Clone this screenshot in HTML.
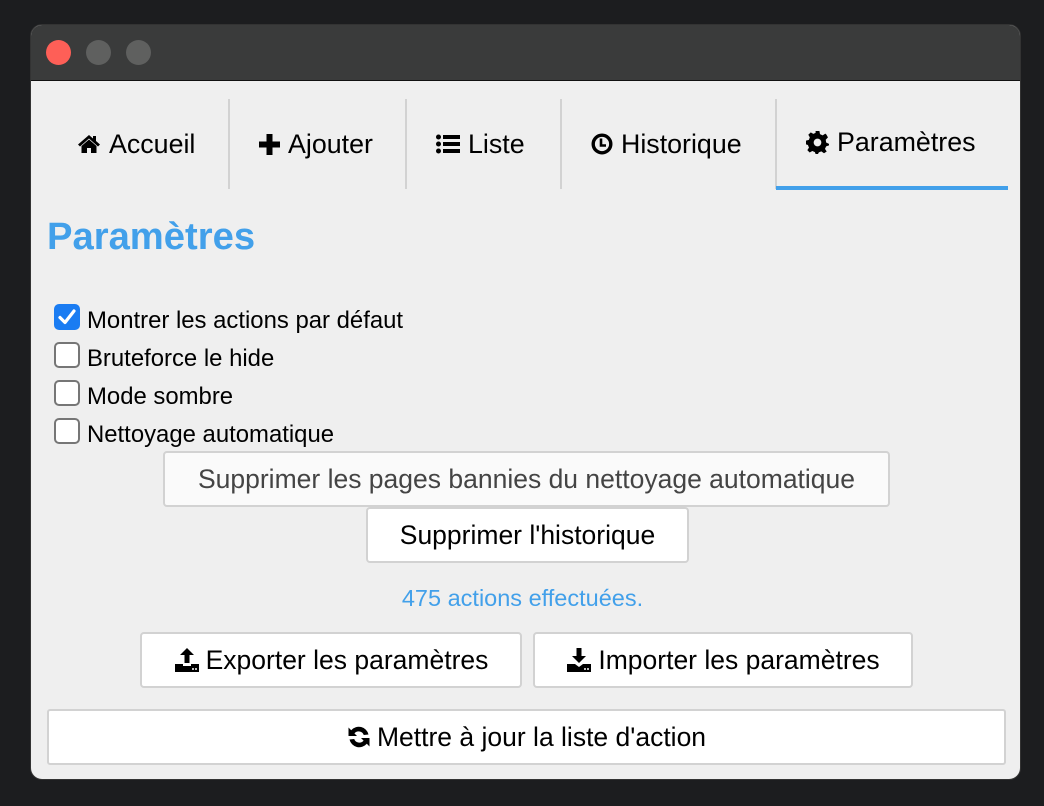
<!DOCTYPE html>
<html><head><meta charset="utf-8"><style>
*{box-sizing:border-box;margin:0;padding:0}
body{width:1044px;height:806px;background:#1c1d1f;font-family:"Liberation Sans",Arial,sans-serif;position:relative;overflow:hidden;color:#000}
.win{position:absolute;left:30px;top:24px;width:991px;height:756px;border-radius:12px;background:#efefef;overflow:hidden;border:1px solid #333}
.tb{position:absolute;left:0;top:0;width:100%;height:56px;background:#3a3b3b;border-bottom:1px solid #111}
.dot{position:absolute;top:15px;width:25px;height:25px;border-radius:50%;background:#5f605f}
.a{position:absolute}
.sep{position:absolute;top:74px;width:2px;height:90px;background:#d2d2d2}
.tab{position:absolute;top:102px;font-size:26.8px;line-height:34px;white-space:nowrap;display:flex;align-items:center}
.tab svg{margin-right:8px}
.cb{position:absolute;left:23px;width:26px;height:26px;border:2px solid #767676;border-radius:5px;background:#fff}
.lbl{position:absolute;left:56px;font-size:23.9px;line-height:28px;white-space:nowrap}
.btn{position:absolute;border:2px solid #d2d2d2;border-radius:4px;background:#fff;font-size:26.5px;display:flex;align-items:center;justify-content:center;white-space:nowrap}
.btn svg{margin-right:6px}
</style></head><body>
<div class="win">
<div class="tb">
<div class="dot" style="left:15px;background:#fe5f57"></div>
<div class="dot" style="left:55px"></div>
<div class="dot" style="left:95px"></div>
</div>
<div class="sep" style="left:197px"></div>
<div class="sep" style="left:374px"></div>
<div class="sep" style="left:529px"></div>
<div class="sep" style="left:744px"></div>
<div class="a" style="left:745px;top:161px;width:232px;height:4px;background:#42a0ea"></div>

<div class="tab" style="left:46px"><svg width="24" height="20" viewBox="0 0 24 20"><path d="M12 1 L1 10.5 L3 12.5 L12 4.5 L21 12.5 L23 10.5 L19 7 V2 H16 V4.5 Z M4.5 12 V19 H10 V14 H14 V19 H19.5 V12 L12 5.5 Z" fill="#000"/></svg>Accueil</div>
<div class="tab" style="left:228px"><svg width="21" height="21" viewBox="0 0 21 21"><path d="M7.5 0 H13.5 V7.5 H21 V13.5 H13.5 V21 H7.5 V13.5 H0 V7.5 H7.5 Z" fill="#000"/></svg>Ajouter</div>
<div class="tab" style="left:405px"><svg width="24" height="20" viewBox="0 0 24 20"><circle cx="2.5" cy="3" r="2.5"/><circle cx="2.5" cy="10" r="2.5"/><circle cx="2.5" cy="17" r="2.5"/><rect x="7" y="1" width="17" height="4"/><rect x="7" y="8" width="17" height="4"/><rect x="7" y="15" width="17" height="4"/></svg>Liste</div>
<div class="tab" style="left:560px"><svg width="22" height="22" viewBox="0 0 22 22"><circle cx="11" cy="11" r="8.8" fill="none" stroke="#000" stroke-width="3.4"/><path d="M10 5.5 V12.5 H15" fill="none" stroke="#000" stroke-width="2.6"/></svg>Historique</div>
<div class="tab" style="left:775px;top:100px"><svg width="23" height="23" viewBox="0 0 24 24"><path d="M10 0 H14 L14.6 3.3 L17.4 4.6 L20.2 2.7 L21.3 3.8 L22.9 6.6 L20.6 9.1 L21 12 L24 13.4 V15 L21 16 L19.8 18.7 L21.6 21.4 L18.8 23.2 L16 21.3 L13.4 22.3 L12.5 24 H10 L9.3 22 L6.6 20.9 L3.8 22.4 L1.4 20 L3.1 17.3 L2 14.6 L0 14 V10 L3 9.3 L4 6.6 L2.4 3.9 L5 1.4 L7.6 3 L10 2 Z" fill="#000"/><circle cx="12" cy="12" r="4" fill="#efefef"/></svg>Paramètres</div>

<div class="a" style="left:16px;top:190px;font-size:38.2px;font-weight:bold;color:#42a0ea;line-height:44px">Paramètres</div>

<div class="cb" style="top:279px;background:#1a7cf2;border-color:#1a7cf2"><svg width="22" height="22" viewBox="0 0 22 22" style="position:absolute;left:0;top:0"><path d="M4 11.5 L9 16.5 L18 5" fill="none" stroke="#fff" stroke-width="3.2" stroke-linecap="round" stroke-linejoin="round"/></svg></div>
<div class="lbl" style="top:282px">Montrer les actions par défaut</div>
<div class="cb" style="top:317px"></div>
<div class="lbl" style="top:320px">Bruteforce le hide</div>
<div class="cb" style="top:355px"></div>
<div class="lbl" style="top:358px">Mode sombre</div>
<div class="cb" style="top:393px"></div>
<div class="lbl" style="top:396px">Nettoyage automatique</div>

<div class="btn" style="left:132px;top:426px;width:727px;height:56px;background:#fafafa;color:#444">Supprimer les pages bannies du nettoyage automatique</div>
<div class="btn" style="left:335px;top:482px;width:323px;height:56px">Supprimer l'historique</div>
<div class="a" style="left:-4px;width:991px;top:559px;text-align:center;font-size:23.5px;color:#42a0ea;line-height:28px">475 actions effectuées.</div>

<div class="btn" style="left:109px;top:607px;width:382px;height:56px"><svg width="26" height="24" viewBox="0 0 26 24"><path d="M13 0 L20 7 H15.5 V15 H10.5 V7 H6 Z M1 16 H9 V18 H17 V16 H25 V24 H1 Z" fill="#000"/><circle cx="19" cy="21" r="1" fill="#fff"/><circle cx="22" cy="21" r="1" fill="#fff"/></svg>Exporter les paramètres</div>
<div class="btn" style="left:502px;top:607px;width:380px;height:56px"><svg width="26" height="24" viewBox="0 0 26 24"><path d="M10.5 0 H15.5 V8 H20 L13 15 L6 8 H10.5 Z M1 16 H9 L13 19 L17 16 H25 V24 H1 Z" fill="#000"/><circle cx="19" cy="21" r="1" fill="#fff"/><circle cx="22" cy="21" r="1" fill="#fff"/></svg>Importer les paramètres</div>

<div class="btn" style="left:16px;top:684px;width:959px;height:56px;border-radius:3px"><svg width="24" height="24" viewBox="0 0 24 24"><path d="M21.5 9.5 A10 10 0 0 0 4.2 5.2 L1.5 2.5 V11 H10 L7.4 8.4 A5.5 5.5 0 0 1 16.8 10 Z M2.5 14.5 A10 10 0 0 0 19.8 18.8 L22.5 21.5 V13 H14 L16.6 15.6 A5.5 5.5 0 0 1 7.2 14 Z" fill="#000"/></svg>Mettre à jour la liste d'action</div>
</div>
</body></html>
